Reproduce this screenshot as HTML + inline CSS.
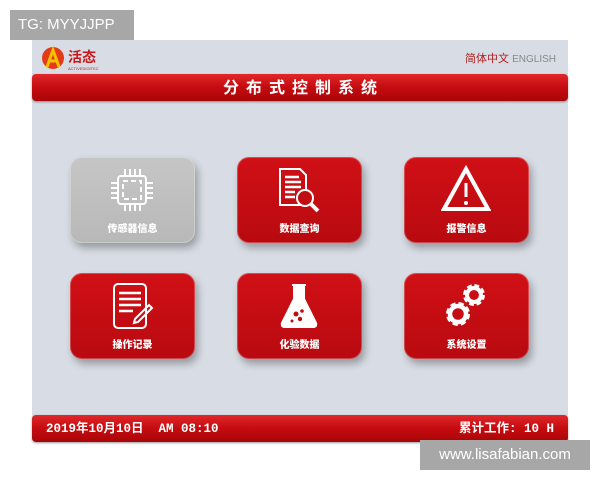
<!DOCTYPE html>
<html><head><meta charset="utf-8"><style>
*{margin:0;padding:0;box-sizing:border-box}
body{width:600px;height:480px;background:#fff;position:relative;overflow:hidden;font-family:"Liberation Sans","Noto Sans CJK SC",sans-serif}
.wm1{position:absolute;left:10px;top:10px;width:124px;height:30px;background:#a7a7a7;color:#fff;font-size:15px;line-height:30px;padding-left:8px;z-index:5}
.wm2{position:absolute;left:420px;top:440px;width:170px;height:30px;background:#a7a7a7;color:#fff;font-size:15px;line-height:30px;text-align:center;z-index:5}
.panel{position:absolute;left:32px;top:40px;width:536px;height:400px;background:#d8dde5}
.bar{position:absolute;left:0;width:536px;height:27px;border-radius:4px;background:linear-gradient(#e0282a,#c40c10 50%,#a80508);box-shadow:0 1px 2px rgba(0,0,0,.4);color:#fff;font-weight:bold}
.title{top:34px;text-align:center;padding-left:7px;font-size:16px;line-height:30px;letter-spacing:7px}
.foot{top:375px;font-size:12.5px;line-height:29px;font-family:"Liberation Mono","Noto Sans CJK SC",monospace}
.lang{position:absolute;right:12px;top:10px;font-size:11px;color:#b02020}
.lang span{color:#888;font-size:10px}
.logo{position:absolute;left:9px;top:5px}
.btn{position:absolute;width:125px;height:86px;border-radius:12px;background:linear-gradient(#d01016,#b80a10);box-shadow:3px 5px 8px rgba(0,0,0,.3),inset 0 0 0 1px rgba(255,255,255,.25);color:#fff;font-size:10px;font-weight:bold;text-align:center}
.btn.g{background:linear-gradient(#c6c6c6,#b8b8b8)}
.btn svg{position:absolute;left:37px;top:8px}
.btn b{position:absolute;left:0;right:0;top:63px}
</style></head><body>
<div class="wm1">TG: MYYJJPP</div>
<div class="wm2">www.lisafabian.com</div>
<div class="panel">
 <div class="logo"><svg width="70" height="28"><circle cx="12" cy="13" r="11" fill="#e33a1a"/><path d="M6 22 L12 5 L18 22 M8.5 16 H15.5" stroke="#f6c000" stroke-width="3" fill="none"/><text x="27" y="17" font-size="14" font-weight="bold" fill="#c8181c" font-family="Noto Sans CJK SC">活态</text><text x="27" y="25" font-size="4" fill="#c8181c">ACTIVEDIGITEC</text></svg></div>
 <div class="lang">简体中文 <span>ENGLISH</span></div>
 <div class="bar title">分布式控制系统</div>
 <div class="bar foot"><span style="position:absolute;left:14px">2019年10月10日&nbsp;&nbsp;AM 08:10</span><span style="position:absolute;right:14px">累计工作: 10 H</span></div>
</div>
<div class="btn g" style="left:70px;top:157px"><svg width="50" height="50" viewBox="0 0 50 50" fill="none" stroke="#fff" stroke-width="2"><rect x="11" y="11" width="28" height="28" rx="3"/><rect x="16" y="16" width="18" height="18" stroke-dasharray="5 3"/><path d="M18 4v7M23 4v7M28 4v7M33 4v7M18 39v7M23 39v7M28 39v7M33 39v7M4 18h7M4 23h7M4 28h7M4 33h7M39 18h7M39 23h7M39 28h7M39 33h7"/></svg><b>传感器信息</b></div>
<div class="btn" style="left:237px;top:157px"><svg width="50" height="50" viewBox="0 0 50 50" fill="none" stroke="#fff" stroke-width="2"><path d="M6 4h20l6 6v30H6z"/><path d="M11 12h14M11 17h16M11 22h16M11 27h10M11 32h10" stroke-width="2.5"/><circle cx="31" cy="33" r="8" fill="#c00d12"/><path d="M37 39l7 7" stroke-width="4"/></svg><b>数据查询</b></div>
<div class="btn" style="left:404px;top:157px"><svg width="50" height="50" viewBox="0 0 50 50"><path d="M25 4L47 44H3z" fill="none" stroke="#fff" stroke-width="4" stroke-linejoin="miter"/><path d="M25 18v14" stroke="#fff" stroke-width="3"/><circle cx="25" cy="38" r="2" fill="#fff"/></svg><b>报警信息</b></div>
<div class="btn" style="left:70px;top:273px"><svg width="50" height="50" viewBox="0 0 50 50" fill="none" stroke="#fff" stroke-width="2"><rect x="7" y="3" width="32" height="44" rx="4"/><path d="M12 12h22M12 18h22M12 24h22M12 30h14" stroke-width="2.5"/><path d="M28 38l14-14 3 3-14 14-4 1z"/></svg><b>操作记录</b></div>
<div class="btn" style="left:237px;top:273px"><svg width="50" height="50" viewBox="0 0 50 50"><path d="M18 4h14M20 4v14L8 42q-1 4 3 4h28q4 0 3-4L30 18V4" fill="#fff" stroke="#fff" stroke-width="2"/><circle cx="22" cy="33" r="2.5" fill="#c00d12"/><circle cx="28" cy="30" r="1.8" fill="#c00d12"/><circle cx="26" cy="38" r="2.2" fill="#c00d12"/><circle cx="18" cy="40" r="1.5" fill="#c00d12"/></svg><b>化验数据</b></div>
<div class="btn" style="left:404px;top:273px"><svg width="50" height="50" viewBox="0 0 50 50"><g transform="translate(33,14)"><circle r="8" fill="none" stroke="#fff" stroke-width="6" stroke-dasharray="4 2.3"/><circle r="7" fill="none" stroke="#fff" stroke-width="4"/></g><g transform="translate(17,33)"><circle r="9" fill="none" stroke="#fff" stroke-width="6" stroke-dasharray="4.5 2.6"/><circle r="8" fill="none" stroke="#fff" stroke-width="4.5"/></g></svg><b>系统设置</b></div>
</body></html>
